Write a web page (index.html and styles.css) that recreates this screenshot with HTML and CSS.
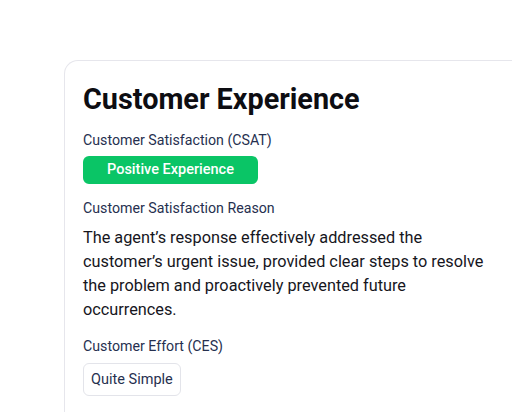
FILE: index.html
```html
<!DOCTYPE html>
<html>
<head>
<meta charset="utf-8">
<link rel="stylesheet" href="styles.css">
</head>
<body>
<div class="page">
  <section class="card">
    <h1 class="title">Customer Experience</h1>
    <div class="field">
      <div class="label">Customer Satisfaction (CSAT)</div>
      <div class="pill-green">Positive Experience</div>
    </div>
    <div class="field">
      <div class="label">Customer Satisfaction Reason</div>
      <p class="reason">The agent’s response effectively addressed the customer’s urgent issue, provided clear steps to resolve the problem and proactively prevented future occurrences.</p>
    </div>
    <div class="field">
      <div class="label">Customer Effort (CES)</div>
      <div class="pill-outline">Quite Simple</div>
    </div>
  </section>
</div>
</body>
</html>
```
FILE: styles.css
```css
html, body {
  margin: 0;
  padding: 0;
  background: #ffffff;
  font-family: Roboto, "Noto Sans", sans-serif;
  overflow: hidden;
}
.page {
  padding: 60px 0 0 64px;
  width: 512px;
  height: 412px;
  box-sizing: border-box;
  overflow: hidden;
}
.card {
  border: 1px solid #e6e6ec;
  border-right: none;
  border-bottom: none;
  border-radius: 14px 0 0 0;
  padding: 21px 0 0 18px;
  height: 352px;
  box-sizing: border-box;
}
.title {
  margin: 0 0 14px 0;
  font-size: 28.8px;
  line-height: 34px;
  font-weight: 700;
  color: #0d0d12;
}
.field {
  display: flex;
  flex-direction: column;
  align-items: flex-start;
  gap: 6px;
}
.field + .field {
  margin-top: 14px;
}
.label {
  font-size: 14.2px;
  line-height: 20px;
  color: #26304f;
}
.pill-green {
  width: 175px;
  height: 28px;
  box-sizing: border-box;
  background: #0ac566;
  color: #ffffff;
  border-radius: 6px;
  font-size: 14.5px;
  line-height: 28px;
  text-align: center;
  font-weight: 500;
}
.reason {
  margin: 2px 0 0 0;
  font-size: 16.3px;
  line-height: 24px;
  color: #16161d;
  width: 416px;
}
.pill-outline {
  margin-top: 1px;
  border: 1px solid #e3e4ea;
  border-radius: 6px;
  padding: 0 7px;
  height: 33px;
  box-sizing: border-box;
  line-height: 31px;
  font-size: 14.5px;
  color: #26304f;
}
```
